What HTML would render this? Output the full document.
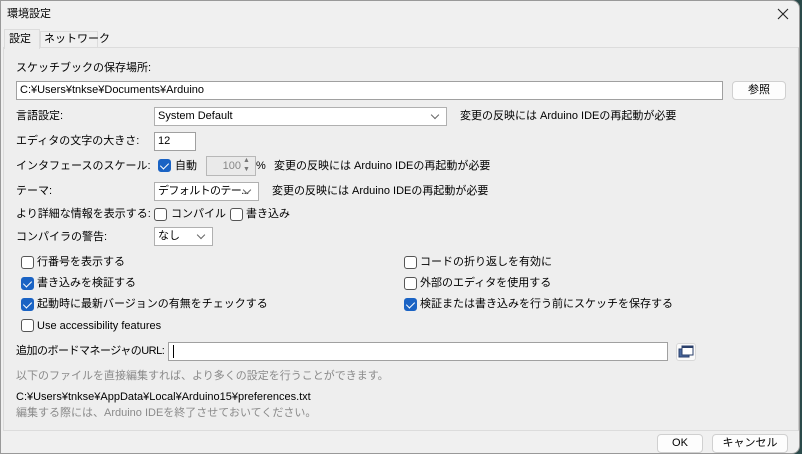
<!DOCTYPE html>
<html><head><meta charset="utf-8"><style>
*{box-sizing:border-box;margin:0;padding:0}
body{width:802px;height:454px;overflow:hidden;background:#2a4a4a;font-family:"Liberation Sans","Noto Sans CJK JP",sans-serif;font-size:11px;color:#000}
#win{position:absolute;left:0;top:0;width:800px;height:454px;background:#f0f0f0;border:1px solid #999;border-radius:0 8px 8px 0}
.a{position:absolute;white-space:nowrap;line-height:14px}
.box{position:absolute;background:#fff;border:1px solid #a0a0a0}
.sel{position:absolute;background:#fff;border:1px solid #b0b0b0;padding-left:3px;line-height:17px;overflow:hidden;white-space:nowrap}
.sel:after{content:"";position:absolute;right:8px;top:4px;width:5px;height:5px;border-right:1px solid #666;border-bottom:1px solid #666;transform:rotate(45deg)}
.btn{position:absolute;background:#fdfdfd;border:1px solid #d0d0d0;border-radius:4px;text-align:center;line-height:16px}
.cb{position:absolute;width:13px;height:13px;border:1px solid #555;border-radius:3px;background:#fff}
.cb.on{background:#1a63c4;border-color:#1a63c4}
.cb.on:after{content:"";position:absolute;left:3px;top:1px;width:4px;height:7px;border-right:1.5px solid #fff;border-bottom:1.5px solid #fff;transform:rotate(45deg)}
.g{color:#8a8a8a}
</style></head><body>
<div id="win">
<div class="a" style="left:6px;top:6px">環境設定</div>
<svg width="12" height="12" style="position:absolute;left:776px;top:7px"><path d="M1 1L11 11M11 1L1 11" stroke="#222" stroke-width="1.1"/></svg>
<div style="position:absolute;left:2px;top:46px;width:796px;height:384px;background:#eeeeee;border:1px solid #dcdcdc;border-right-color:#ccc"></div>
<div style="position:absolute;left:3px;top:28px;width:36px;height:20px;background:#eeeeee;border:1px solid #dcdcdc;border-bottom:none"></div>
<div class="a" style="left:8px;top:31px">設定</div>
<div style="position:absolute;left:39px;top:30px;width:58px;height:16px;border:1px solid #dcdcdc;border-bottom:none"></div>
<div class="a" style="left:43px;top:31px">ネットワーク</div>

<div class="a" style="left:15px;top:60px">スケッチブックの保存場所:</div>
<div class="box" style="left:15px;top:80px;width:707px;height:19px;line-height:17px;padding-left:3px">C:¥Users¥tnkse¥Documents¥Arduino</div>
<div class="btn" style="left:731px;top:80px;width:54px;height:19px">参照</div>

<div class="a" style="left:15px;top:108px">言語設定:</div>
<div class="sel" style="left:153px;top:106px;width:293px;height:19px">System Default</div>
<div class="a" style="left:459px;top:108px">変更の反映には Arduino IDEの再起動が必要</div>

<div class="a" style="left:15px;top:133px">エディタの文字の大きさ:</div>
<div class="box" style="left:153px;top:131px;width:42px;height:19px;line-height:17px;padding-left:3px">12</div>

<div class="a" style="left:15px;top:158px">インタフェースのスケール:</div>
<div class="cb on" style="left:157px;top:158px"></div>
<div class="a" style="left:174px;top:158px">自動</div>
<div style="position:absolute;left:205px;top:155px;width:50px;height:20px;background:#eaeaea;border:1px solid #b8b8b8;color:#888;line-height:18px;padding-right:14px;text-align:right">100</div>
<div class="a" style="left:242px;top:155px;font-size:7px;color:#777;line-height:9px">▲<br>▼</div>
<div class="a" style="left:255px;top:158px">%</div>
<div class="a" style="left:273px;top:158px">変更の反映には Arduino IDEの再起動が必要</div>

<div class="a" style="left:15px;top:183px">テーマ:</div>
<div class="sel" style="left:153px;top:181px;width:105px;height:19px;letter-spacing:-0.6px">デフォルトのテー...</div>
<div class="a" style="left:271px;top:183px">変更の反映には Arduino IDEの再起動が必要</div>

<div class="a" style="left:15px;top:206px">より詳細な情報を表示する:</div>
<div class="cb" style="left:153px;top:207px"></div>
<div class="a" style="left:170px;top:206px">コンパイル</div>
<div class="cb" style="left:229px;top:207px"></div>
<div class="a" style="left:245px;top:206px">書き込み</div>

<div class="a" style="left:15px;top:229px">コンパイラの警告:</div>
<div class="sel" style="left:153px;top:226px;width:59px;height:19px">なし</div>

<div class="cb" style="left:20px;top:255px"></div><div class="a" style="left:36px;top:254px">行番号を表示する</div>
<div class="cb on" style="left:20px;top:276px"></div><div class="a" style="left:36px;top:275px">書き込みを検証する</div>
<div class="cb on" style="left:20px;top:297px"></div><div class="a" style="left:36px;top:296px">起動時に最新バージョンの有無をチェックする</div>
<div class="cb" style="left:20px;top:318px"></div><div class="a" style="left:36px;top:318px">Use accessibility features</div>
<div class="cb" style="left:403px;top:255px"></div><div class="a" style="left:419px;top:254px">コードの折り返しを有効に</div>
<div class="cb" style="left:403px;top:276px"></div><div class="a" style="left:419px;top:275px">外部のエディタを使用する</div>
<div class="cb on" style="left:403px;top:297px"></div><div class="a" style="left:419px;top:296px">検証または書き込みを行う前にスケッチを保存する</div>

<div class="a" style="left:15px;top:343px;letter-spacing:-0.5px">追加のボードマネージャのURL:</div>
<div class="box" style="left:167px;top:341px;width:500px;height:19px"><div style="position:absolute;left:4px;top:2px;width:1px;height:13px;background:#000"></div></div>
<div style="position:absolute;left:675px;top:342px;width:20px;height:18px;background:#fafafa;border:1px solid #d8d8d8;border-radius:3px">
<svg width="18" height="16" viewBox="0 0 18 16" style="position:absolute;left:0;top:0"><rect x="2" y="5" width="10" height="8" fill="#4a6aa0" stroke="#2a3f6a"/><rect x="5" y="2" width="11" height="9" fill="#fff" stroke="#2a3f6a"/><rect x="5" y="2" width="11" height="2" fill="#2a3f6a"/></svg></div>

<div class="a g" style="left:15px;top:368px">以下のファイルを直接編集すれば、より多くの設定を行うことができます。</div>
<div class="a" style="left:15px;top:389px">C:¥Users¥tnkse¥AppData¥Local¥Arduino15¥preferences.txt</div>
<div class="a g" style="left:15px;top:405px">編集する際には、Arduino IDEを終了させておいてください。</div>

<div class="btn" style="left:656px;top:433px;width:46px;height:19px">OK</div>
<div class="btn" style="left:711px;top:433px;width:76px;height:19px">キャンセル</div>
</div>
</body></html>
